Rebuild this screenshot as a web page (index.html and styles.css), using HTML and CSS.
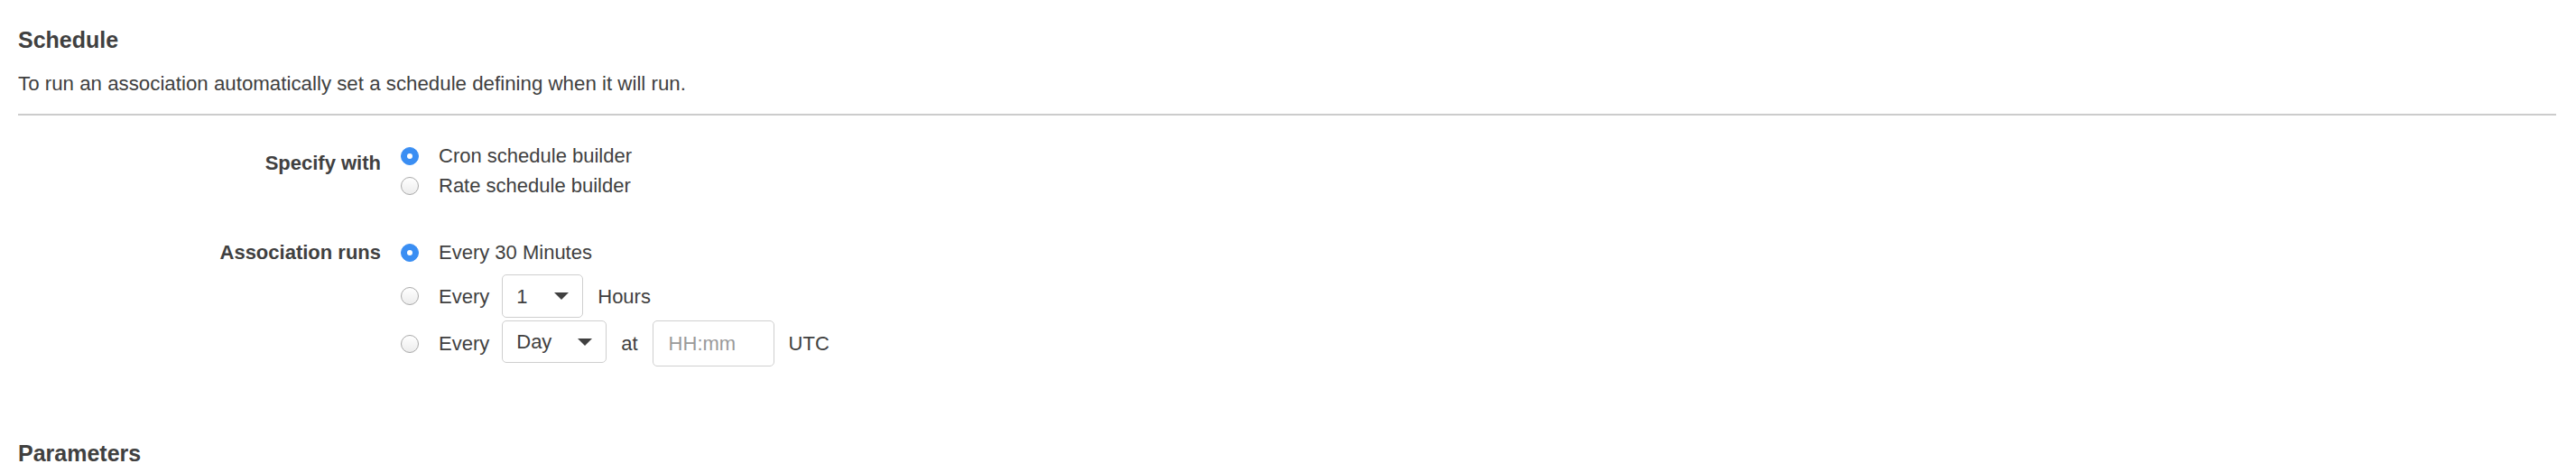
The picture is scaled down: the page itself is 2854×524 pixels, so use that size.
FILE: index.html
```html
<!DOCTYPE html>
<html lang="en">
<head>
    <meta charset="UTF-8">
    <title>Schedule</title>
    <link rel="stylesheet" href="styles.css">
</head>
<body>

<!-- Schedule section -->
<div class="section">
    <div class="section-head">
        <h2 class="section-title">Schedule</h2>
        <p class="section-desc">To run an association automatically set a schedule defining when it will run.</p>
    </div>

    <div class="form">
        <div class="field field-first">
            <div class="field-label">Specify with</div>
            <div class="field-options">
                <div class="option">
                    <span class="radio checked"></span>
                    <span>Cron schedule builder</span>
                </div>
                <div class="option">
                    <span class="radio"></span>
                    <span>Rate schedule builder</span>
                </div>
            </div>
        </div>

        <div class="field field-runs">
            <div class="field-label">Association runs</div>
            <div class="field-options">
                <div class="option">
                    <span class="radio checked"></span>
                    <span>Every 30 Minutes</span>
                </div>
                <div class="option option-hours">
                    <span class="radio"></span>
                    <span>Every</span>
                    <div class="select select-num"><span>1</span><span class="caret"></span></div>
                    <span>Hours</span>
                </div>
                <div class="option option-day">
                    <span class="radio"></span>
                    <span>Every</span>
                    <div class="select select-unit"><span>Day</span><span class="caret"></span></div>
                    <span>at</span>
                    <input type="text" class="time-input" placeholder="HH:mm">
                    <span>UTC</span>
                </div>
            </div>
        </div>
    </div>
</div>

<!-- Parameters section -->
<div class="section section-next">
    <h2 class="section-title">Parameters</h2>
</div>

</body>
</html>
```

FILE: styles.css
```css
* {
    margin: 0;
    padding: 0;
    box-sizing: border-box;
}

body {
    font-family: "Liberation Sans", Helvetica, Arial, sans-serif;
    font-size: 22px;
    color: #404040;
    background: #fff;
    padding: 29px 22px 0 20px;
}

/* Header of the section */
.section-title {
    font-size: 25px;
    line-height: 30px;
    font-weight: bold;
    color: #404040;
}

.section-head {
    padding-bottom: 20px;
    border-bottom: 2px solid #ccc;
}

.section-desc {
    margin-top: 21px;
    line-height: 26px;
    font-size: 22.3px;
}

/* Form rows */
.form {
    margin-top: 28px;
}

.field {
    display: flex;
}

.field-runs {
    margin-top: 41px;
}

.field-label {
    width: 402px;
    margin-right: 22px;
    text-align: right;
    font-weight: bold;
    line-height: 33px;
}

.field-first .field-label {
    padding-top: 8px;
}

.field-options {
    display: flex;
    flex-direction: column;
}

.option {
    display: flex;
    align-items: center;
    line-height: 33px;
    gap: 16px;
}

.option-hours {
    height: 48px;
    margin-top: 8px;
}

.option-day {
    height: 51px;
    margin-top: 3px;
}

/* Radio */
.radio {
    width: 20px;
    height: 20px;
    border-radius: 50%;
    border: 1px solid #a9a9a9;
    background: linear-gradient(#fff, #ececec);
    margin-right: 6px;
    flex-shrink: 0;
    position: relative;
}

.radio.checked {
    border-color: #3a8ef3;
    background: #3a8ef3;
}

.radio.checked::after {
    content: "";
    position: absolute;
    top: 6px;
    left: 6px;
    width: 6px;
    height: 6px;
    border-radius: 50%;
    background: #fff;
}

/* Dropdown */
.select {
    display: flex;
    align-items: center;
    justify-content: space-between;
    height: 48px;
    padding: 0 15px;
    border: 1px solid #cfcfcf;
    border-radius: 5px;
    background: #fff;
    margin-left: -2px;
}

.select-num {
    width: 90px;
}

.select-unit {
    width: 116px;
    height: 47px;
    align-self: flex-start;
}

.caret {
    width: 0;
    height: 0;
    border-left: 8px solid transparent;
    border-right: 8px solid transparent;
    border-top: 8px solid #404040;
}

.time-input {
    width: 135px;
    height: 51px;
    padding: 0 17px;
    border: 1px solid #cfcfcf;
    border-radius: 5px;
    font-family: inherit;
    font-size: 22px;
    color: #404040;
    outline: none;
}

.time-input::placeholder {
    color: #9a9a9a;
}

/* Next section */
.section-next {
    margin-top: 81px;
}
```
